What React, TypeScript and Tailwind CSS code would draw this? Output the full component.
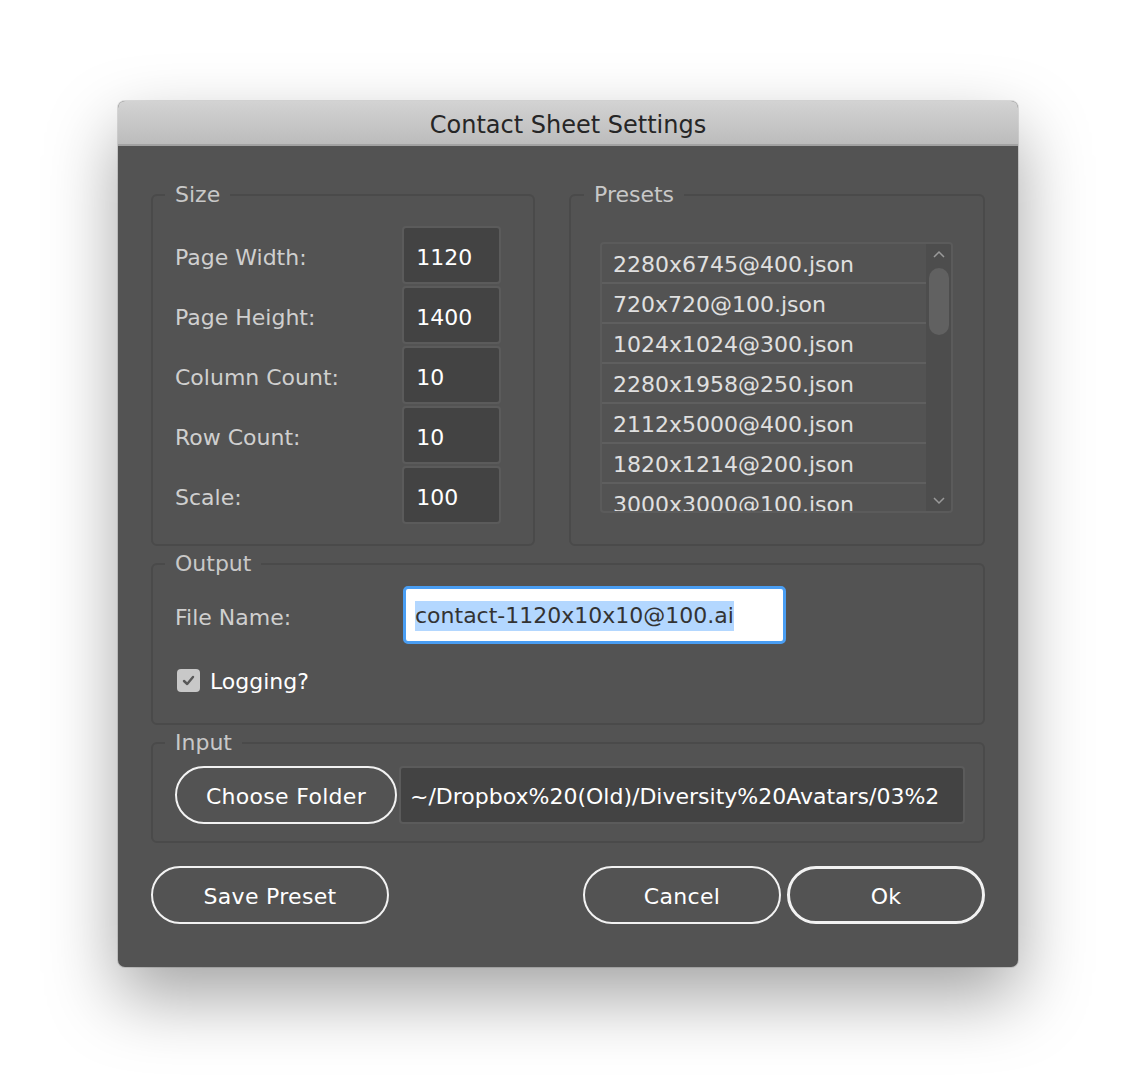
import React from 'react';

const SIZE_FIELDS = [
  { label: 'Page Width:', value: '1120' },
  { label: 'Page Height:', value: '1400' },
  { label: 'Column Count:', value: '10' },
  { label: 'Row Count:', value: '10' },
  { label: 'Scale:', value: '100' },
];

const PRESETS = [
  '2280x6745@400.json',
  '720x720@100.json',
  '1024x1024@300.json',
  '2280x1958@250.json',
  '2112x5000@400.json',
  '1820x1214@200.json',
  '3000x3000@100.json',
];

const Group: React.FC<{ title: string; className?: string; legendClass?: string; children: React.ReactNode }> = ({
  title,
  className = '',
  legendClass = '-ml-[10px]',
  children,
}) => (
  <fieldset className={`border-2 border-[#4a4a4a] rounded-[6px] min-w-0 ${className}`}>
    <legend className={`px-[10px] text-[22px] leading-[26px] text-[#c8c8c8] ${legendClass}`}>{title}</legend>
    {children}
  </fieldset>
);

const PillButton: React.FC<{ label: string; className?: string; strong?: boolean }> = ({ label, className = '', strong }) => (
  <button
    className={`h-[58px] rounded-full ${strong ? 'border-[3px]' : 'border-2'} border-[#f2f2f2] text-white text-[22px] leading-none tracking-[0.3px] flex items-center justify-center pt-[3px] ${className}`}
  >
    {label}
  </button>
);

const App: React.FC = () => {
  return (
    <div className="min-h-[1088px] bg-white pt-[101px] font-['DejaVu_Sans',sans-serif]">
      <div className="mx-auto w-[900px] translate-x-[1px] rounded-[7px] bg-[#535353] shadow-[0_30px_70px_rgba(0,0,0,0.36),0_0_0_1px_rgba(0,0,0,0.12)] overflow-hidden">
        {/* title bar */}
        <div className="h-[45px] bg-gradient-to-b from-[#d3d3d3] to-[#bcbcbc] border-b-2 border-[#a2a2a2] flex items-center justify-center pt-[5px]">
          <span className="text-[24px] text-[#262626] leading-none">Contact Sheet Settings</span>
        </div>

        <div className="px-[33px] pt-[36px] pb-[43px]">
          <div className="grid grid-cols-[384px_416px] gap-x-[34px]">
            <Group title="Size" className="pl-[22px] pr-[32px] pt-[18px] pb-[20px]">
              <div className="flex flex-col gap-[2px]">
                {SIZE_FIELDS.map((f) => (
                  <div key={f.label} className="flex items-center h-[58px] pt-[4px]">
                    <span className="w-[228px] text-[22px] text-[#cfcfcf]">{f.label}</span>
                    <div className="-mt-[4px] w-[99px] h-[58px] rounded-[4px] bg-[#434343] border-2 border-[#5b5b5b] flex items-center pl-[12px] pt-[4px] text-[22px] text-white">
                      {f.value}
                    </div>
                  </div>
                ))}
              </div>
            </Group>

            <Group title="Presets" legendClass="-ml-[16px]" className="pl-[29px] pr-[30px] pt-[34px] pb-[30px]">
              <div className="h-[271px] rounded-[4px] border-2 border-[#5b5b5b] flex overflow-hidden">
                <div className="flex-1 overflow-hidden">
                  {PRESETS.map((p) => (
                    <div
                      key={p}
                      className="h-[40px] border-b-2 border-[#5f5f5f] flex items-center pl-[11px] pt-[2px] text-[22px] text-[#e0e0e0] whitespace-nowrap"
                    >
                      {p}
                    </div>
                  ))}
                </div>
                <div className="w-[25px] bg-[#4d4d4d] flex flex-col items-center">
                  <svg width="14" height="10" viewBox="0 0 14 10" className="mt-[5px]">
                    <polyline points="2,8 7,3 12,8" fill="none" stroke="#9a9a9a" strokeWidth="1.5" />
                  </svg>
                  <div className="mt-[9px] w-[20px] h-[67px] rounded-full bg-[#616161]" />
                  <div className="flex-1" />
                  <svg width="14" height="10" viewBox="0 0 14 10" className="mb-[5px]">
                    <polyline points="2,2 7,7 12,2" fill="none" stroke="#9a9a9a" strokeWidth="1.5" />
                  </svg>
                </div>
              </div>
            </Group>
          </div>

          <Group title="Output" className="mt-[5px] pl-[22px] pr-[22px] pt-[9px] pb-[20px]">
            <div className="flex items-center">
              <span className="w-[228px] pt-[4px] text-[22px] text-[#cfcfcf]">File Name:</span>
              <div className="w-[383px] h-[58px] rounded-[5px] bg-white border-[3px] border-[#4a9ef3] flex items-center pl-[9px] pt-[2px]">
                <span className="bg-[#b3d7ff] text-[22px] leading-[30px] text-[#333333]">contact-1120x10x10@100.ai</span>
              </div>
            </div>
            <div className="mt-[13px] flex items-center h-[46px]">
              <div className="ml-[2px] w-[23px] h-[23px] rounded-[4px] bg-[#c8c8c8] flex items-center justify-center">
                <svg width="15" height="15" viewBox="0 0 15 15">
                  <polyline points="3,8 6.2,11 12,4" fill="none" stroke="#585858" strokeWidth="2.4" strokeLinecap="round" strokeLinejoin="round" />
                </svg>
              </div>
              <span className="ml-[10px] pt-[2px] text-[22px] text-white">Logging?</span>
            </div>
          </Group>

          <Group title="Input" className="mt-[5px] pl-[22px] pr-[18px] pt-[10px] pb-[17px]">
            <div className="flex items-center gap-[2px]">
              <PillButton label="Choose Folder" className="w-[222px] shrink-0" />
              <div className="flex-1 h-[58px] rounded-[4px] bg-[#434343] border-2 border-[#5b5b5b] flex items-center pl-[9px] pt-[3px] text-[22px] text-white whitespace-nowrap overflow-hidden">
                ~/Dropbox%20(Old)/Diversity%20Avatars/03%2
              </div>
            </div>
          </Group>

          <div className="mt-[23px] flex items-center">
            <PillButton label="Save Preset" className="w-[238px]" />
            <div className="flex-1" />
            <PillButton label="Cancel" className="w-[198px]" />
            <PillButton label="Ok" strong className="ml-[6px] w-[198px]" />
          </div>
        </div>
      </div>
    </div>
  );
};

export default App;
